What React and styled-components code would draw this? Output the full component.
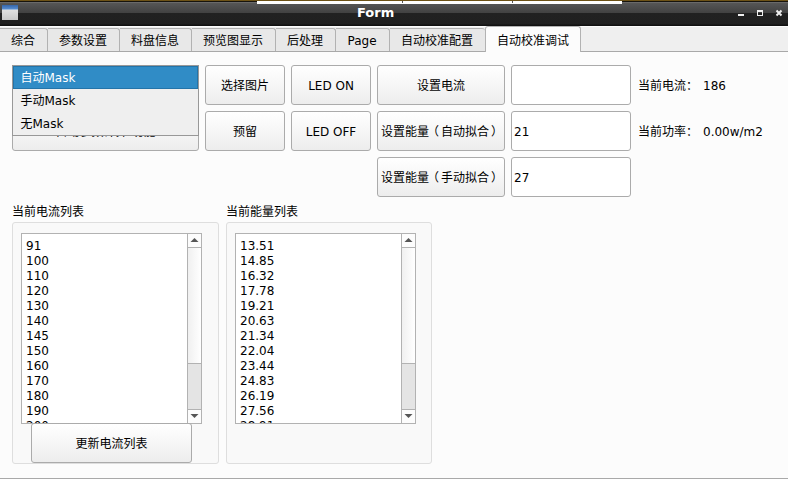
import React from "react";
import styled, { createGlobalStyle, css } from "styled-components";

const Global = createGlobalStyle`
  * { box-sizing: border-box; }
  body { margin: 0; overflow: hidden; background: #fcfcfc; }
`;

const Window = styled.div`
  width: 788px;
  height: 479px;
  display: flex;
  flex-direction: column;
  overflow: hidden;
  background: #fcfcfc;
  color: #000;
  font: 12px/15px "DejaVu Sans", "Noto Sans CJK SC", sans-serif;
  white-space: nowrap;
`;

const TitleBar = styled.header`
  position: relative;
  flex: none;
  height: 26px;
  display: grid;
  grid-template-columns: 355px auto 1fr;
  align-items: center;
  padding: 0 5px 0 2px;
  background: linear-gradient(#6d5216 0 1px, #17140d 1px 2px, #6a6a6a 2px 3px, #565656 3px, #414141 13px, #212121 13px, #202020 24px, #111 25px);
`;

const Backdrop = styled.div`
  position: absolute;
  left: 257px;
  top: 1px;
  width: 365px;
  height: 3px;
  background: #fff;
  display: flex;
  gap: 109px;
  padding-left: 145px;
`;

const Tick = styled.i`
  width: 1px;
  height: 2px;
  background: #555;
`;

const WindowIcon = styled.svg`
  display: block;
  width: 16px;
  height: 16px;
`;

const Title = styled.h1`
  margin: 0;
  color: #fff;
  font-size: 13px;
  line-height: 16px;
  font-weight: bold;
`;

const Controls = styled.svg`
  justify-self: end;
  width: 46px;
  height: 8px;
`;

const TabBar = styled.nav`
  flex: none;
  height: 26px;
  display: flex;
  align-items: flex-end;
  border-bottom: 1px solid #a9a9a9;
  background: linear-gradient(#fcfcfc 0 1px, #efefef 1px);
`;

const Tab = styled.div`
  width: ${(p) => p.$w}px;
  height: 23px;
  padding: 3px 1px 0 0;
  border: 1px solid #b2b2b2;
  border-left: 0;
  border-bottom: 0;
  border-radius: 0 3px 0 0;
  background: #e8e8e8;
  display: flex;
  align-items: center;
  justify-content: center;
  ${(p) => p.$last && css`border-right: 0;`}
  ${(p) => p.$active && css`
    height: 26px;
    margin-bottom: -1px;
    padding: 4px 0 0;
    border-left: 1px solid #b2b2b2;
    border-radius: 3px 3px 0 0;
    background: #fcfcfc;
  `}
`;

const Page = styled.main`
  flex: 1;
  padding: 13px 12px 0;
  border-bottom: 1px solid #a9a9a9;
`;

const ControlGrid = styled.section`
  position: relative;
  display: grid;
  grid-template-columns: 187px 80px 80px 128px 120px 59px auto;
  grid-template-rows: repeat(3, 40px);
  gap: 6px;
  align-items: center;
`;

const Button = styled.button`
  width: 100%;
  height: 40px;
  padding: 2px 0 0;
  border: 1px solid #ababab;
  border-radius: 3px;
  background: linear-gradient(#fff, #ededed);
  color: inherit;
  font: inherit;
`;

const Input = styled.input`
  width: 100%;
  height: 40px;
  padding: 2px 2px 0;
  border: 1px solid #ababab;
  border-radius: 3px;
  background: #fff;
  color: inherit;
  font: inherit;
  outline: none;
`;

const Label = styled.span`
  padding: 2px 0 0 1px;
`;

const OpenParen = styled.span`
  margin: 0 2px 0 -2px;
`;

const CloseParen = styled.span`
  margin: 0 -2px 0 2px;
`;

const Popup = styled.div`
  position: absolute;
  left: 0;
  top: 0;
  width: 187px;
  height: 71px;
  border: 1px solid #989898;
  background: #efefef;
`;

const Option = styled.div`
  height: 23px;
  padding: 4px 6.5px;
  border: 1px solid transparent;
  ${(p) => p.$selected && css`
    color: #fff;
    background: #308cc6;
    border-color: #2374a9;
  `}
`;

const Blank = styled.span``;

const Groups = styled.section`
  display: flex;
  gap: 7px;
  margin-top: 7px;
`;

const Group = styled.div`
  width: ${(p) => p.$w}px;
`;

const Caption = styled.div`
  height: 18px;
  padding-top: 1px;
`;

const Frame = styled.div`
  height: 242px;
  padding: 10px 8px 0;
  border: 1px solid #dedede;
  border-radius: 3px;
  background: #f9f9f9;
`;

const ListBox = styled.div`
  width: 181px;
  height: 191px;
  display: flex;
  overflow: hidden;
  border: 1px solid #b2b2b2;
  background: #fff;
`;

const Items = styled.div`
  flex: 1;
  padding: 5px 4px 0;
`;

const Item = styled.div`
  height: 15px;
`;

const ScrollBar = styled.div`
  width: 14px;
  display: grid;
  grid-template-rows: 13px 117px 45px 14px;
  border-left: 1px solid #b2b2b2;
  background: #e4e4e4;
`;

const Arrow = styled.svg`
  display: block;
  width: 13px;
  height: 13px;
  background: #fcfcfc;
`;

const Thumb = styled.div`
  border: 1px solid #b2b2b2;
  border-width: 1px 0;
  background: linear-gradient(90deg, #f0f0f0, #fff);
`;

const DownCell = styled.div`
  border-top: 1px solid #b2b2b2;
  background: #fcfcfc;
`;

const UpdateRow = styled.div`
  width: 161px;
  margin: -1px 0 0 10px;
`;

const tabs = [
  ["综合", 48],
  ["参数设置", 72],
  ["料盘信息", 72],
  ["预览图显示", 84],
  ["后处理", 60],
  ["Page", 54],
  ["自动校准配置", 95],
  ["自动校准调试", 96],
];

const currents = [91, 100, 110, 120, 130, 140, 145, 150, 160, 170, 180, 190, 200];
const energies = ["13.51", "14.85", "16.32", "17.78", "19.21", "20.63", "21.34", "22.04", "23.44", "24.83", "26.19", "27.56", "28.91"];

function ValueList({ values }) {
  return (
    <ListBox>
      <Items>{values.map((v) => <Item key={v}>{v}</Item>)}</Items>
      <ScrollBar>
        <Arrow viewBox="0 0 13 13"><path d="M2.5 8 6.5 4l4 4z" fill="#555" /></Arrow>
        <Thumb />
        <Blank />
        <DownCell><Arrow viewBox="0 0 13 13"><path d="M2.5 4h8l-4 4z" fill="#555" /></Arrow></DownCell>
      </ScrollBar>
    </ListBox>
  );
}

function EnergyButton({ mode }) {
  return (
    <Button>设置能量<OpenParen>（</OpenParen>{mode}<CloseParen>）</CloseParen></Button>
  );
}

export default function App() {
  return (
    <Window>
      <Global />
      <TitleBar>
        <Backdrop><Tick /><Tick /></Backdrop>
        <WindowIcon viewBox="0 0 16 16">
          <defs>
            <linearGradient id="pane" x2="0" y2="1"><stop stopColor="#ececec" /><stop offset="1" stopColor="#c8c8c8" /></linearGradient>
            <linearGradient id="cap" x2="0" y2="1"><stop stopColor="#3565a8" /><stop offset="1" stopColor="#5c92d4" /></linearGradient>
          </defs>
          <path d="M0 0h16v15H0z" fill="url(#pane)" />
          <path d="M0 0h16v4.5H0z" fill="url(#cap)" />
        </WindowIcon>
        <Title>Form</Title>
        <Controls viewBox="0 0 46 8">
          <path d="M1 5h6v2H1z" fill="#eee" />
          <path d="M20 1h6v6h-6zM21 3v3h4V3z" fill="#eee" fillRule="evenodd" />
          <path d="m39.5 1.5 5 5m0-5-5 5" fill="none" stroke="#eee" strokeWidth="2" />
        </Controls>
      </TitleBar>
      <TabBar>
        {tabs.map(([name, w], i) => (
          <Tab key={name} $w={w} $active={i === 7} $last={i === 6}>{name}</Tab>
        ))}
      </TabBar>
      <Page>
        <ControlGrid>
          <Blank />
          <Button>选择图片</Button>
          <Button>LED ON</Button>
          <Button>设置电流</Button>
          <Input defaultValue="" />
          <Label>当前电流：</Label>
          <Label>186</Label>

          <Button>自动参数计算 功能</Button>
          <Button>预留</Button>
          <Button>LED OFF</Button>
          <EnergyButton mode="自动拟合" />
          <Input defaultValue="21" />
          <Label>当前功率：</Label>
          <Label>0.00w/m2</Label>

          <Blank /><Blank /><Blank />
          <EnergyButton mode="手动拟合" />
          <Input defaultValue="27" />
          <Popup>
            <Option $selected>自动Mask</Option>
            <Option>手动Mask</Option>
            <Option>无Mask</Option>
          </Popup>
        </ControlGrid>
        <Groups>
          <Group $w={207}>
            <Caption>当前电流列表</Caption>
            <Frame>
              <ValueList values={currents} />
              <UpdateRow><Button>更新电流列表</Button></UpdateRow>
            </Frame>
          </Group>
          <Group $w={206}>
            <Caption>当前能量列表</Caption>
            <Frame><ValueList values={energies} /></Frame>
          </Group>
        </Groups>
      </Page>
    </Window>
  );
}
